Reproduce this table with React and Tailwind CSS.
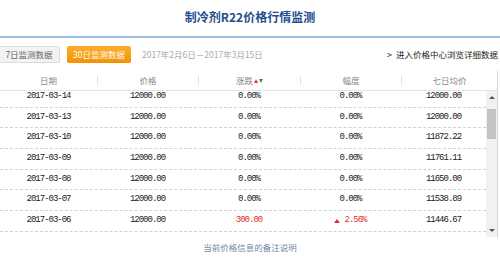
import React from "react";

const rows = [
  ["2017-03-14", "12000.00", "0.00%", "0.00%", "12000.00"],
  ["2017-03-13", "12000.00", "0.00%", "0.00%", "12000.00"],
  ["2017-03-10", "12000.00", "0.00%", "0.00%", "11872.22"],
  ["2017-03-09", "12000.00", "0.00%", "0.00%", "11761.11"],
  ["2017-03-08", "12000.00", "0.00%", "0.00%", "11650.00"],
  ["2017-03-07", "12000.00", "0.00%", "0.00%", "11538.89"],
  ["2017-03-06", "12000.00", "300.00", "2.56%", "11446.67", true],
];

const cjk = { fontFamily: '"Noto Sans CJK SC", "Noto Sans", sans-serif' };
const mono = { fontFamily: '"Liberation Mono", "DejaVu Sans Mono", monospace' };

function HeadCell({ children, first }) {
  return (
    <div className="flex items-center h-full">
      {!first && <div className="w-px h-[9px] bg-[#e2e2e2]" />}
      <div className="flex-1 flex items-center justify-center">{children}</div>
    </div>
  );
}

export default function App() {
  return (
    <div className="w-[500px] h-[258px] bg-white overflow-hidden" style={cjk}>
      <div className="h-[36px] flex items-center justify-center pb-[2px]">
        <span className="text-[12px] font-bold text-[#1f4f8f]">制冷剂R22价格行情监测</span>
      </div>
      <div className="h-[2px] bg-[#9dbde0]" />
      <div className="h-[33px] flex items-center">
        <div className="flex items-center gap-[7px] -ml-[2px]">
          <div className="h-[17px] w-[62px] flex items-center justify-center bg-[#f3f3f3] border border-[#dcdcdc] rounded-[2px] text-[8.5px] text-[#666]">7日监测数据</div>
          <div className="h-[17px] w-[64px] flex items-center justify-center bg-[linear-gradient(#fbb030,#f39200)] rounded-[2px] text-[8.5px] text-white">30日监测数据</div>
        </div>
        <span className="ml-[11px] text-[8.5px] text-[#aaa]">2017年2月6日－2017年3月15日</span>
        <span className="ml-auto mr-[2px] text-[8.5px] text-[#222] flex items-center gap-[4px]">
          <span className="text-[9px]">&gt;</span>进入价格中心浏览详细数据
        </span>
      </div>
      <div className="w-[498px] border-r border-[#d8d8d8]">
        <div className="h-[20px] grid grid-cols-[97px_101px_102px_101px_1fr] text-[8.5px] text-[#888] border-b border-[#e4e4e4]">
          <HeadCell first>日期</HeadCell>
          <HeadCell>价格</HeadCell>
          <HeadCell>
            涨跌
            <span className="ml-[1px] w-0 h-0 border-x-[2.5px] border-x-transparent border-b-[4px] border-b-[#e33]" />
            <span className="ml-[1px] w-0 h-0 border-x-[2.5px] border-x-transparent border-t-[4px] border-t-[#2a9a2a]" />
          </HeadCell>
          <HeadCell>幅度</HeadCell>
          <HeadCell>七日均价</HeadCell>
        </div>
        <div className="h-[146px] flex">
          <div className="w-[486px] overflow-hidden">
            <div className="-mt-[4px]">
              {rows.map((r) => (
                <div
                  key={r[0]}
                  className="h-[20.67px] grid grid-cols-[97px_101px_102px_101px_1fr] items-center border-b border-dashed border-[#d2d2d2] text-[9px] text-[#222] tracking-[-1px]"
                  style={mono}
                >
                  <div className="text-center">{r[0]}</div>
                  <div className="text-center">{r[1]}</div>
                  <div className={"text-center " + (r[5] ? "text-[#e03030]" : "")}>{r[2]}</div>
                  <div className="flex items-center justify-center">
                    {r[5] && (
                      <span className="mr-[4px] w-0 h-0 border-x-[3px] border-x-transparent border-b-[4px] border-b-[#e03030]" />
                    )}
                    <span className={r[5] ? "text-[#e03030]" : ""}>{r[3]}</span>
                  </div>
                  <div className="text-center">{r[4]}</div>
                </div>
              ))}
            </div>
          </div>
          <div className="w-[11px] bg-[#f1f1f1] flex flex-col items-center">
            <div className="h-[13px] flex items-center justify-center">
              <span className="w-0 h-0 border-x-[3px] border-x-transparent border-b-[3px] border-b-[#555]" />
            </div>
            <div className="mt-[5px] w-[9px] h-[30px] bg-[#c3c3c3]" />
            <div className="mt-auto h-[13px] flex items-center justify-center">
              <span className="w-0 h-0 border-x-[3px] border-x-transparent border-t-[3px] border-t-[#555]" />
            </div>
          </div>
        </div>
      </div>
      <div className="h-[21px] flex items-center justify-center">
        <span className="text-[8.5px] text-[#7387a5]">当前价格信息的备注说明</span>
      </div>
    </div>
  );
}
